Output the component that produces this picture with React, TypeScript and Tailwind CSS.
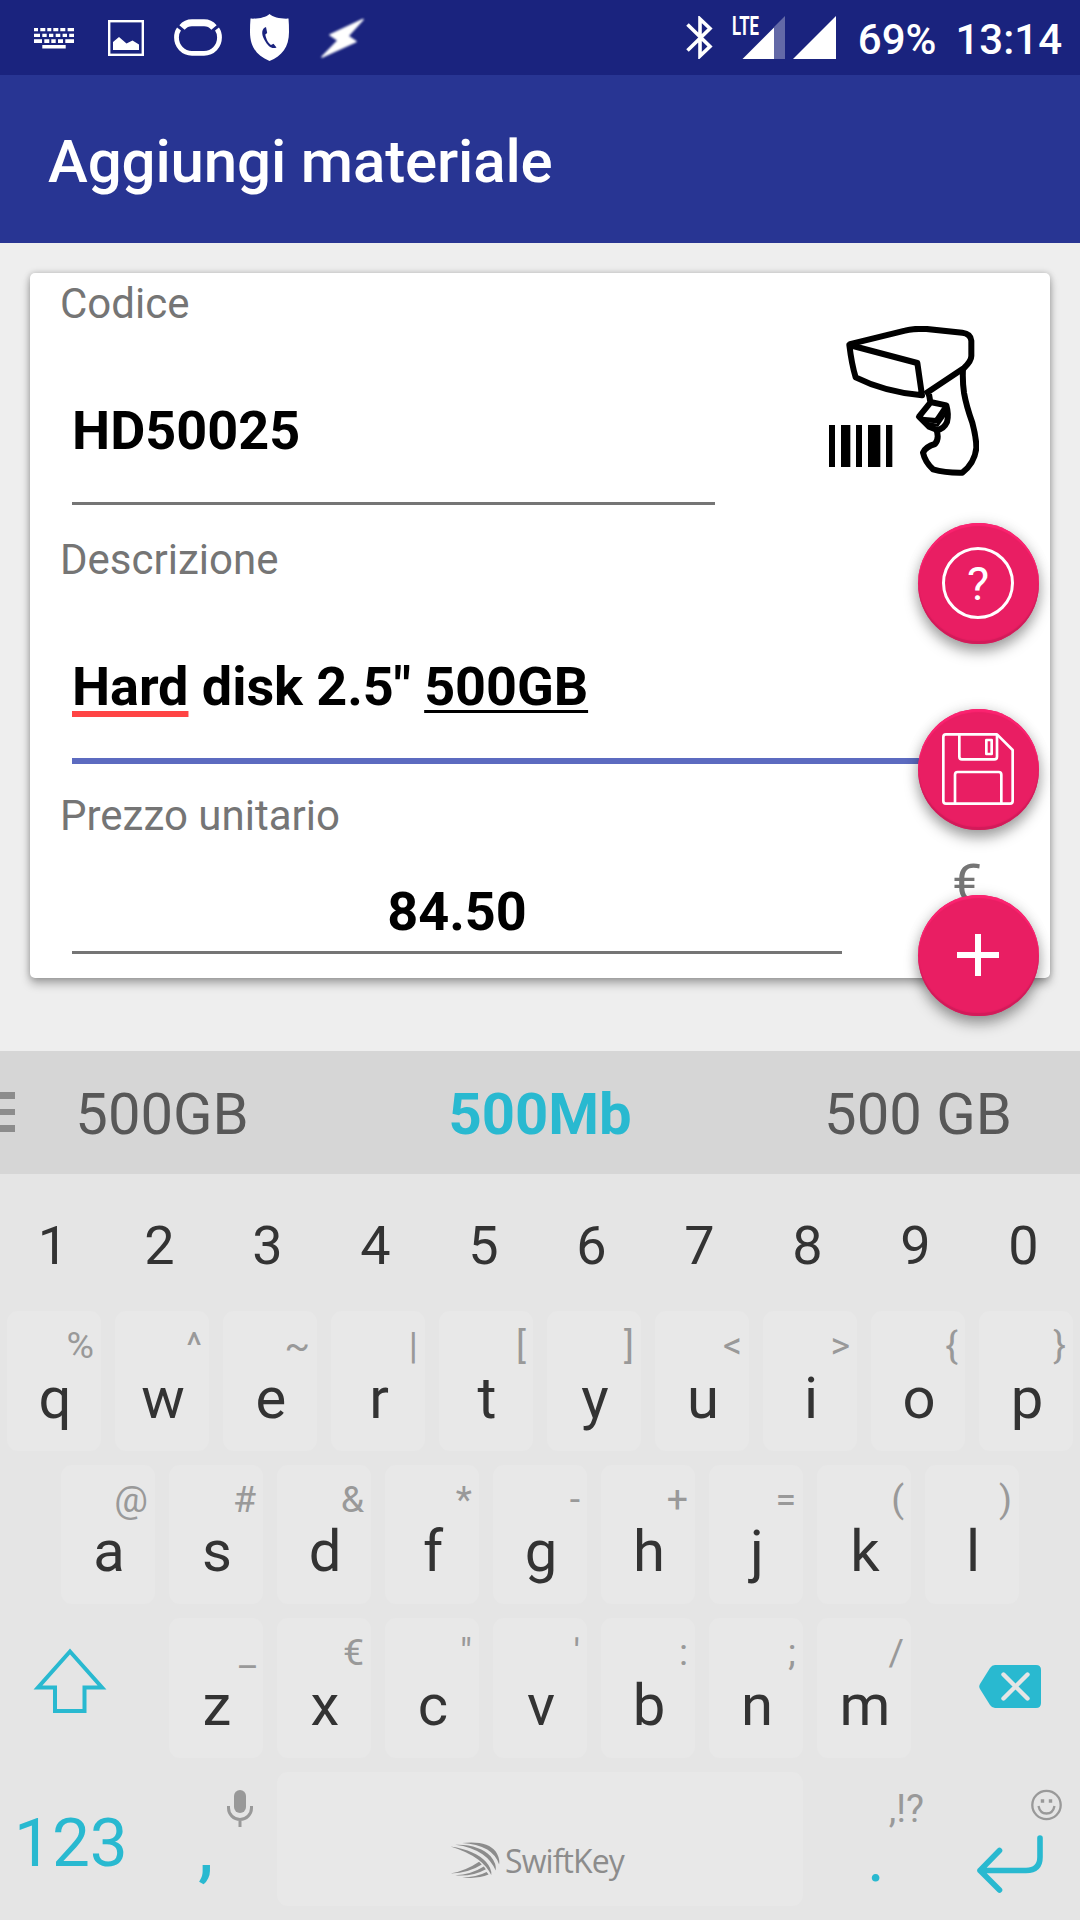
import type { ReactNode } from 'react';

type KeyDef = [letter: string, hint: string];

const digits = ['1', '2', '3', '4', '5', '6', '7', '8', '9', '0'];

const topRow: KeyDef[] = [
  ['q', '%'], ['w', '^'], ['e', '~'], ['r', '|'], ['t', '['],
  ['y', ']'], ['u', '<'], ['i', '>'], ['o', '{'], ['p', '}'],
];
const homeRow: KeyDef[] = [
  ['a', '@'], ['s', '#'], ['d', '&'], ['f', '*'], ['g', '-'],
  ['h', '+'], ['j', '='], ['k', '('], ['l', ')'],
];
const bottomRow: KeyDef[] = [
  ['z', '_'], ['x', '€'], ['c', '"'], ['v', "'"], ['b', ':'], ['n', ';'], ['m', '/'],
];

function StatusBar() {
  return (
    <header className="flex h-[75px] items-start bg-[#1a237e] text-white">
      <div className="flex items-start pl-[34px]">
        <svg className="mt-7" width="40" height="21" viewBox="0 0 40 21" fill="currentColor">
          <path d="M0 0h4v3.3H0zM6.3 0h5v3.3h-5zM13.3 0h4v3.3h-4zM19.3 0h5v3.3h-5zM26.3 0h5v3.3h-5zM33.6 0H40v3.3h-6.4zM0 5.7h6v3.3H0zM8.3 5.7h4.4v3.3H8.3zM15 5.7h4.3v3.3H15zM21.7 5.7h4.6v3.3h-4.6zM28.6 5.7H33v3.3h-4.4zM35.2 5.7H40v3.3h-4.8zM0 11.3h8V15H0zM10.3 11.3h5V15h-5zM17.3 11.3h4.4V15h-4.4zM24 11.3h5V15h-5zM31.3 11.3H40V15h-8.7zM8.3 17h23.4v3.6H8.3z" />
        </svg>
        <svg className="ml-[34px] mt-5" width="36" height="36" viewBox="0 0 36 36">
          <rect x="1.2" y="1.2" width="33.6" height="33.6" fill="none" stroke="currentColor" strokeWidth="2.4" />
          <path d="M5 30V22l6-5 7.5 6.5 6-3 6.500 4V30z" fill="currentColor" />
        </svg>
        <svg className="ml-[30px] mt-[19px]" width="48" height="37" viewBox="0 0 48 37" fill="none" stroke="currentColor">
          <path d="M8 8.500Q12 3.800 18 3.800H30Q36 3.800 40 8.500" strokeWidth="7" />
          <path d="M5 10Q2.500 13.500 2.500 18.500C2.500 27 9 34.300 18 34.300H30C39 34.300 45.500 27 45.500 18.500Q45.500 13.500 43 10" strokeWidth="4.800" />
        </svg>
        <svg className="ml-7 mt-[14px]" width="39" height="47" viewBox="0 0 39 47">
          <path d="M19.500 0C23 3.500 31 5 38.500 4.600Q39 10 39 18C39 33 32 42 19.500 47C7 42 0 33 0 18Q0 10 .5 4.600C8 5 16 3.500 19.500 0z" fill="currentColor" />
          <path d="M16 13C11.500 14.500 11 20 14.500 26C18 32.500 22 35.500 26.500 33.500L23.500 29.800L21 31C18.500 29.500 16 25 15.300 20.500L17.200 19z" fill="#1a237e" />
        </svg>
        <svg className="ml-[31px] mt-[17px] blur-[1px]" width="46" height="43" viewBox="0 0 46 43" fill="currentColor" stroke="currentColor" strokeWidth="1.500" strokeLinejoin="round">
          <path d="M43 2.500L10 18L18 23.500L2 40L36 24.500L28 19z" />
        </svg>
      </div>

      <div className="ml-auto flex items-start pr-[18px] font-[Roboto] text-[42px] font-medium leading-[80px]">
        <svg className="mt-4" width="27" height="43" viewBox="0 0 27 43" fill="none" stroke="currentColor" strokeWidth="3.600">
          <path d="M1.500 8.500L24 30.500L14 40V3L24 12.500L1.500 34.500" />
        </svg>
        <svg className="ml-[19px] mt-4 overflow-visible" width="53" height="43" viewBox="0 0 53 43" fill="currentColor">
          <path d="M53 0V43H42V11z" opacity=".32" />
          <path d="M10.500 43L42 11.500V43z" />
          <text x="0" y="19" fontSize="25" fontWeight="700" textLength="27" lengthAdjust="spacingAndGlyphs">LTE</text>
        </svg>
        <svg className="ml-2 mt-4" width="43" height="43" viewBox="0 0 43 43" fill="currentColor">
          <path d="M43 0V43H0z" />
        </svg>
        <span className="ml-[22px]">69%</span>
        <span className="ml-[19px]">13:14</span>
      </div>
    </header>
  );
}

function ScannerIcon() {
  return (
    <svg className="blur-[0.6px]" width="150" height="150" viewBox="0 0 450 450" fill="none" stroke="#000" strokeWidth="18" strokeLinejoin="round">
      <path d="M60 55L228 14Q250 8 285 8L400 20Q425 23 427 44V90Q427 105 405 126L288 204" />
      <path d="M61 57L265 111L279 208Q165 197 80 154Q68 115 61 57z" />
      <path d="M402 128Q400 165 405 200Q412 240 430 290Q442 335 442 365Q438 410 400 440Q350 441 312 430Q288 408 282 380Q290 362 318 354Q332 338 322 310" />
      <path d="M300 205L304 228L352 238Q360 265 354 288Q345 308 325 312L300 302L270 272L304 230" />
      <path d="M352 240L322 284L278 280" strokeWidth="16" />
      <path d="M290 292L325 298L350 262" strokeWidth="9" />
      <path d="M0 297h18v126H0zM36 297h28v126H36zM81 297h18v126H81zM117 297h37v126h-37zM171 297h19v126h-19z" fill="#000" stroke="none" />
    </svg>
  );
}

function Fab({ label, children }: { label: string; children: ReactNode }) {
  return (
    <button
      aria-label={label}
      className="flex size-[121px] items-center justify-center rounded-full bg-[#e91e63] text-white shadow-[0_8px_14px_rgba(0,0,0,0.34),0_0_14px_rgba(0,0,0,0.12),inset_0_3px_1px_#fb2370,inset_0_-3px_1px_#d21b5a]"
    >
      {children}
    </button>
  );
}

function FieldLabel({ children }: { children: ReactNode }) {
  return <div className="h-[61px] pl-[30px] text-[42px] leading-[61px] text-[#757575]">{children}</div>;
}

function MaterialCard() {
  return (
    <section className="mx-[30px] mt-[30px] h-[705px] rounded-[5px] bg-white shadow-[0_6px_10px_rgba(0,0,0,0.28),0_0_6px_rgba(0,0,0,0.22)]">
      <div className="flex h-64">
        <div className="w-[685px]">
          <FieldLabel>Codice</FieldLabel>
          <div className="ml-[42px] flex h-[171px] items-center border-b-3 border-[#757575] pt-[25px] text-[54px] font-bold leading-[64px]">
            HD50025
          </div>
        </div>
        <div className="ml-[114px] mt-[53px]">
          <ScannerIcon />
        </div>
      </div>

      <div className="h-64">
        <FieldLabel>Descrizione</FieldLabel>
        <div className="mx-[42px] flex h-[174px] items-center border-b-6 border-[#5c6bc0] pt-[25px] text-[54px] font-bold leading-[64px] tracking-[-0.06px]">
          <p className="whitespace-pre">
            <span className="underline decoration-[#ff4444] decoration-[6px] underline-offset-[6px] [text-decoration-skip-ink:none]">Hard</span>
            {' disk 2.5" '}
            <span className="underline decoration-[3px] underline-offset-[5px] [text-decoration-skip-ink:none]">500GB</span>
          </p>
        </div>
      </div>

      <FieldLabel>Prezzo unitario</FieldLabel>
      <div className="ml-[42px] flex items-start">
        <div className="flex h-[108px] w-[770px] items-center justify-center border-b-3 border-[#757575] pt-[26px] text-[54px] font-bold leading-[64px]">
          84.50
        </div>
        <span className="ml-[110px] mt-[6px] text-[54px] leading-[64px] text-[#757575]">€</span>
      </div>
    </section>
  );
}

function FabColumn() {
  return (
    <div className="absolute left-[917.500px] top-[522.500px] flex flex-col gap-[65px]">
      <Fab label="Help">
        <span className="flex size-[72px] items-center justify-center rounded-full border-3 border-white pt-px text-[47px] leading-[60px]">?</span>
      </Fab>
      <Fab label="Save">
        <svg width="72" height="72" viewBox="0 0 216 216" fill="none" stroke="currentColor" strokeWidth="8" strokeLinejoin="round">
          <path d="M12 4H165L212 51V204Q212 212 204 212H12Q4 212 4 204V12Q4 4 12 4z" />
          <path d="M52 4V71Q52 79 60 79H157Q165 79 165 71V4" />
          <rect x="133" y="21" width="16" height="42" />
          <path d="M39 212V125Q39 117 47 117H170Q178 117 178 125V212" />
        </svg>
      </Fab>
      <Fab label="Add">
        <svg width="42" height="42" viewBox="0 0 42 42" stroke="currentColor" strokeWidth="6">
          <path d="M21 0V42M0 21H42" />
        </svg>
      </Fab>
    </div>
  );
}

function Suggestions() {
  return (
    <div className="relative h-[123px] overflow-hidden bg-[#d6d6d6]">
      <div className="-mx-[27px] flex h-full items-center text-center text-[58px] leading-[64px] text-[#585858]">
        <span className="flex-1 pt-[3px]">500GB</span>
        <span className="flex-1 pt-[3px] font-bold text-[#29b9d0]">500Mb</span>
        <span className="flex-1 pt-[3px]">500 GB</span>
      </div>
      <svg className="absolute left-0 top-[41px]" width="15" height="40" viewBox="0 0 15 40" fill="#8c8c8c">
        <path d="M0 0h15v7H0zM0 17h15v6H0zM0 33h15v7H0z" />
      </svg>
    </div>
  );
}

function LetterKey({ letter, hint }: { letter: string; hint: string }) {
  return (
    <div className="relative mx-[7px] my-[7px] flex w-[94px] items-center justify-center rounded-[11px] bg-[#e8e8e8] pl-[2px] pt-[34px]">
      <span className="text-[58px] leading-[70px] text-[#333]">{letter}</span>
      <span className="absolute right-[7px] top-[10px] text-[37.500px] leading-[48px] text-[#999]">{hint}</span>
    </div>
  );
}

function Row({ children }: { children: ReactNode }) {
  return <div className="flex h-[153.600px] justify-center">{children}</div>;
}

function Keyboard() {
  return (
    <div className="h-[746px] overflow-hidden bg-[#e5e5e5]">
      <div className="flex h-[130px] items-center pt-[13px] text-center text-[54px] leading-[64px] text-[#333]">
        {digits.map((d) => (
          <span key={d} className="w-[108px] pr-[5px] first:pr-[2px]">{d}</span>
        ))}
      </div>

      <Row>
        {topRow.map(([letter, hint]) => <LetterKey key={letter} letter={letter} hint={hint} />)}
      </Row>
      <Row>
        {homeRow.map(([letter, hint]) => <LetterKey key={letter} letter={letter} hint={hint} />)}
      </Row>

      <Row>
        <div className="w-[162px] pl-[33px] pt-[37px]">
          <svg width="74" height="66" viewBox="0 0 74 66" fill="none" stroke="#29b9d0" strokeWidth="4">
            <path d="M37 3.500L69 39.500H51.500V63H22V39.500H5z" />
          </svg>
        </div>
        {bottomRow.map(([letter, hint]) => <LetterKey key={letter} letter={letter} hint={hint} />)}
        <div className="w-[162px] pl-[61px] pt-[54px]">
          <svg width="62" height="43" viewBox="0 0 62 43">
            <path d="M16 0H57Q62 0 62 5V38Q62 43 57 43H16Q13 43 11 40L1 24Q-.5 21.500 1 19L11 3Q13 0 16 0z" fill="#29b9d0" />
            <path d="M24.500 9.500L48.500 33.500M48.500 9.500L24.500 33.500" stroke="#e5e5e5" strokeWidth="4.400" strokeLinecap="round" />
          </svg>
        </div>
      </Row>

      {/* 123, comma, space bar, period, enter */}
      <div className="flex h-[155px] text-[#29b9d0]">
        <div className="w-[162px] pl-[14px] pt-[38px] text-[67.500px] leading-[80px]">123</div>
        <div className="relative w-[108px]">
          <span className="absolute left-[36px] top-[39px] text-[70px] font-medium leading-[90px]">,</span>
          <svg className="absolute left-[65px] top-[25px]" width="26" height="37" viewBox="0 0 26 37" fill="none" stroke="#999">
            <rect x="7" y="0" width="12" height="23" rx="6" fill="#999" stroke="none" />
            <path d="M1.500 16V18A11.500 11.500 0 0 0 24.500 18V16M13 29V37" strokeWidth="3" />
          </svg>
        </div>
        <div className="mx-[7px] mt-[7px] flex h-[134px] w-[526px] items-end justify-center rounded-[11px] bg-[#e8e8e8] pb-[23px] pr-[6px] text-[#8c8c8c]">
          <svg className="mb-[5px]" width="50" height="36" viewBox="0 0 144 106" fill="currentColor">
            <path d="M34 3C80-3 118 6 133 28Q146 48 143 66Q134 38 108 22Q78 5 34 3z" />
            <path d="M14 8C60 6 98 20 118 42Q136 64 133 84Q120 54 94 36Q62 14 14 8z" />
            <path d="M0 13C50 20 86 38 104 58Q122 78 120 97Q106 70 82 52Q50 28 0 13z" />
            <path d="M0 93Q46 84 84 58L92 66Q56 90 0 93z" />
            <path d="M14 98Q60 96 98 72L104 80Q66 102 14 98z" />
            <path d="M34 104Q76 104 106 88L112 96Q78 110 34 104z" />
          </svg>
          <span className="ml-[5px] font-['Open_Sans'] text-[32px] leading-[44px] tracking-[-0.9px]">SwiftKey</span>
        </div>
        <div className="relative w-[108px]">
          <span className="absolute left-[57px] top-[53px] text-[68px] leading-[80px]">.</span>
          <span className="absolute right-[-6px] top-[20px] text-[38px] leading-[48px] text-[#999]">,!?</span>
        </div>
        <div className="relative w-[162px]">
          <svg className="absolute left-[113px] top-[24px]" width="31" height="32" viewBox="0 0 31 32" fill="none" stroke="#999" strokeWidth="2.300">
            <circle cx="15.500" cy="16" r="14.200" />
            <path d="M7.500 17Q9 24.500 15.500 24.500Q22 24.500 23.500 17" />
            <path d="M11.500 10.200v3.600M19.500 10.200v3.600" strokeWidth="3.400" />
          </svg>
          <svg className="absolute left-[58px] top-[70px]" width="68" height="58" viewBox="0 0 68 58" fill="none" stroke="#29b9d0" strokeWidth="5.600" strokeLinecap="round" strokeLinejoin="round">
            <path d="M64 3V22Q64 35.500 50 35.500H4M23.500 15.500L4 35.500L23.500 55" />
          </svg>
        </div>
      </div>
    </div>
  );
}

export default function App() {
  return (
    <div className="relative flex h-[1920px] w-[1080px] flex-col overflow-hidden bg-[#eeeeee] font-[Roboto,sans-serif]">
      <StatusBar />
      <div className="flex h-[168px] items-center bg-[#283593] pl-12 pt-[5px]">
        <h1 className="text-[60px] font-medium leading-[70px] tracking-[-0.14px] text-white">Aggiungi materiale</h1>
      </div>
      <main className="h-[808px]">
        <MaterialCard />
      </main>
      <FabColumn />
      <Suggestions />
      <Keyboard />
    </div>
  );
}
